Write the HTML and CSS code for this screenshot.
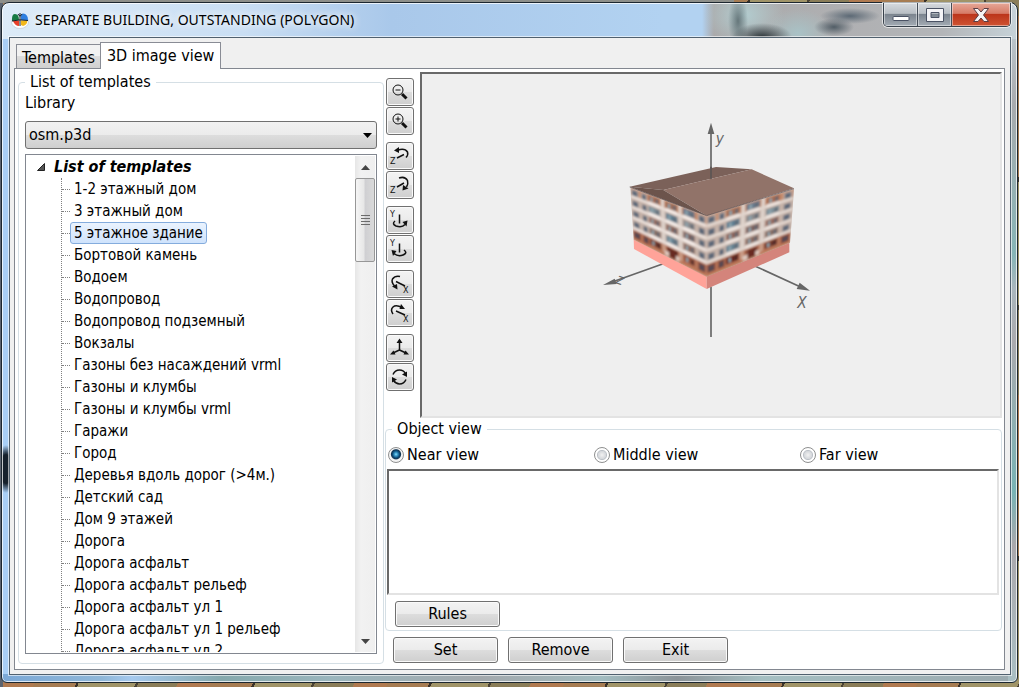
FILE: index.html
```html
<!DOCTYPE html>
<html lang="en">
<head>
<meta charset="utf-8">
<title>SEPARATE BUILDING, OUTSTANDING (POLYGON)</title>
<link rel="stylesheet" href="styles.css">
</head>
<body>
<div class="desktop">
<main class="window">
  <header class="titlebar">
    <svg class="app-icon" width="18" height="18" viewBox="0 0 18 18" aria-hidden="true">
      <ellipse cx="9" cy="11" rx="8.5" ry="6.5" fill="#fff" stroke="#b9c3cc" stroke-width=".6"/>
      <path d="M1 8Q1 3 4 3Q8 3 8 9L1 10Z" fill="#167a44"/>
      <path d="M10 9Q9 3 12 2.500Q17 3 17 9Z" fill="#2e7fe0"/>
      <path d="M2 10L8 9.500V15Q4 15 2 10Z" fill="#e8402c"/>
      <path d="M10 9.500H16.500Q16 14 12 15L10 14Z" fill="#f2b81c"/>
      <path d="M9 2V15M7 3Q9 7 11 3M1 10Q9 8 17 9.500" stroke="#17202a" stroke-width="1" fill="none"/>
    </svg>
    <h1 class="title">SEPARATE BUILDING, OUTSTANDING (POLYGON)</h1>
    <div class="caption">
      <button class="cap min" aria-label="Minimize"><svg width="18" height="16" viewBox="0 0 18 16"><rect x="1" y="9.500" width="16" height="4" rx="1" fill="#fff" stroke="#4a5264"/></svg></button>
      <button class="cap max" aria-label="Maximize"><svg width="18" height="16" viewBox="0 0 18 16"><path fill-rule="evenodd" d="M.5 1.500H17.500V14.500H.5ZM5 5.500V10.500H13V5.500Z" fill="#f4f4f6" stroke="#4a5264"/></svg></button>
      <button class="cap close" aria-label="Close"><svg width="18" height="16" viewBox="0 0 18 16"><path d="M1.500 1.500H6L9 5L12 1.500H16.500L11.500 8L16.500 14.500H12L9 11L6 14.500H1.500L6.500 8Z" fill="#f6f3f3" stroke="#5a3d44"/></svg></button>
    </div>
  </header>
  <div class="client">
    <div class="tabs" role="tablist">
      <button class="tab" role="tab" aria-selected="false">Templates</button>
      <button class="tab active" role="tab" aria-selected="true">3D image view</button>
    </div>
    <div class="panel" role="tabpanel">
      <fieldset class="group library">
        <legend>List of templates</legend>
        <label class="field-label" for="lib">Library</label>
        <div class="select-wrap">
          <select id="lib"><option>osm.p3d</option></select>
          <svg class="select-arrow" width="9" height="5" viewBox="0 0 9 5" aria-hidden="true"><path d="M0 0H9L4.500 5Z"/></svg>
        </div>
        <div class="tree">
          <div class="tree-body">
            <div class="tree-root"><svg width="8" height="8" viewBox="0 0 8 8" aria-hidden="true"><path d="M7.500 .5V7.500H.5Z" fill="#555" stroke="#222"/></svg><span>List of templates</span></div>
            <ul class="tree-list">
              <li><span>1-2 этажный дом</span></li>
              <li><span>3 этажный дом</span></li>
              <li><span class="selected">5 этажное здание</span></li>
              <li><span>Бортовой камень</span></li>
              <li><span>Водоем</span></li>
              <li><span>Водопровод</span></li>
              <li><span>Водопровод подземный</span></li>
              <li><span>Вокзалы</span></li>
              <li><span>Газоны без насаждений vrml</span></li>
              <li><span>Газоны и клумбы</span></li>
              <li><span>Газоны и клумбы vrml</span></li>
              <li><span>Гаражи</span></li>
              <li><span>Город</span></li>
              <li><span>Деревья вдоль дорог (&gt;4м.)</span></li>
              <li><span>Детский сад</span></li>
              <li><span>Дом 9 этажей</span></li>
              <li><span>Дорога</span></li>
              <li><span>Дорога асфальт</span></li>
              <li><span>Дорога асфальт рельеф</span></li>
              <li><span>Дорога асфальт ул 1</span></li>
              <li><span>Дорога асфальт ул 1 рельеф</span></li>
              <li><span>Дорога асфальт ул 2</span></li>
            </ul>
          </div>
          <div class="scrollbar">
            <button class="scroll-arrow" aria-label="Scroll up"><svg width="9" height="5" viewBox="0 0 9 5"><path d="M0 5H9L4.500 0Z" fill="#444"/></svg></button>
            <div class="thumb"><i></i><i></i><i></i><i></i></div>
            <button class="scroll-arrow end" aria-label="Scroll down"><svg width="9" height="5" viewBox="0 0 9 5"><path d="M0 0H9L4.500 5Z" fill="#444"/></svg></button>
          </div>
        </div>
      </fieldset>

      <div class="right">
        <div class="viewer">
          <div class="tools">
            <div class="pair">
              <button class="tool" aria-label="Zoom out"><svg viewBox="0 0 20 20"><circle cx="8" cy="8" r="5"/><path d="M5.500 8H10.500"/><path class="thick" d="M12 12L16.500 16.500"/></svg></button>
              <button class="tool" aria-label="Zoom in"><svg viewBox="0 0 20 20"><circle cx="8" cy="8" r="5"/><path d="M5.500 8H10.500M8 5.500V10.500"/><path class="thick" d="M12 12L16.500 16.500"/></svg></button>
            </div>
            <div class="pair">
              <button class="tool" aria-label="Rotate Z left"><svg viewBox="0 0 20 20"><path class="bold" d="M8 4Q15 2 17.500 6Q18.500 9 16 11.500M7 12L14 8.500"/><path class="solid" d="M4 4.500L9 1V7Z"/><text x="0" y="18">Z</text></svg></button>
              <button class="tool" aria-label="Rotate Z right"><svg viewBox="0 0 20 20"><path class="bold" d="M9 3Q15 1 17.500 5.500Q18.500 9 16.500 12M7 12L14 8"/><path class="solid" d="M12.500 15.500L13 10L18.500 13.500Z"/><text x="0" y="18">Z</text></svg></button>
            </div>
            <div class="pair">
              <button class="tool" aria-label="Rotate Y left"><svg viewBox="0 0 20 20"><path class="bold" d="M9.500 4.500V13.500M5 11Q1.500 14 6 16Q12 18 15 14.500"/><path class="solid" d="M12.500 12L17.500 10.500L16.500 16.500Z"/><text x="0" y="7">Y</text></svg></button>
              <button class="tool" aria-label="Rotate Y right"><svg viewBox="0 0 20 20"><path class="bold" d="M9.500 4.500V13.500M14 11Q18 14 13 16Q8 18 4 14.500"/><path class="solid" d="M1.500 11L6.500 12L3 17Z"/><text x="0" y="7">Y</text></svg></button>
            </div>
            <div class="pair">
              <button class="tool" aria-label="Rotate X left"><svg viewBox="0 0 20 20"><path class="bold" d="M10 2.500Q5 1.500 2.500 5Q1 8 4.500 12M6 7.500L15 12"/><path class="solid" d="M2 12.500L7 10L7.500 15.500Z"/><text x="13" y="19">X</text></svg></button>
              <button class="tool" aria-label="Rotate X right"><svg viewBox="0 0 20 20"><path class="bold" d="M3 11Q0 7 3 4Q6 1.500 12 4.500M6 8L15 12"/><path class="solid" d="M11 1L15 6H9.500Z"/><text x="13" y="19">X</text></svg></button>
            </div>
            <div class="pair">
              <button class="tool" aria-label="Show axes"><svg viewBox="0 0 20 20"><path class="bold" d="M9.500 4V12L3 15M9.500 12L16 15"/><path class="solid" d="M9.500 .5L12.500 5H6.500ZM0 16.500L3.500 12.500L5.500 16.500ZM19 16.500L15.500 12.500L13.500 16.500Z"/></svg></button>
              <button class="tool" aria-label="Refresh"><svg viewBox="0 0 20 20"><path class="bold" d="M3 7.500Q5 3 9.500 3Q13.500 3 15.500 6.500M16 12.500Q14 17 9.500 17Q6 17 3.500 13.500"/><path class="solid" d="M12 7.500L17 4.500V10ZM7 12.500L2 10V15.500Z"/></svg></button>
            </div>
          </div>
          <div class="scene">
            <svg class="model" viewBox="0 0 720 720" role="img" aria-label="Five-storey building on three axes">
              <defs><filter id="soft" x="-5%" y="-5%" width="110%" height="110%"><feGaussianBlur stdDeviation="2.600"/></filter>
                <clipPath id="walls"><path d="M121 232L350 317L612 237L600 398L350 501L131 389Z"/></clipPath></defs>
              <g stroke="#666" stroke-width="5">
                <path d="M363 530V681M228 458L60 518M486 464L640 535M363 60V206"/>
              </g>
              <path d="M363 38L373 72H353ZM39 525L74 506L80 522ZM660 542L620 537L629 518Z" fill="#666"/>
              <path d="M131 388L350 499V537L132 417Z" fill="#ffa399"/>
              <path d="M350 499L598 397V427L350 537Z" fill="#d4847b"/>
              <path d="M121 232L350 317V500L131 389Z" fill="#dccdc5"/>
              <path d="M350 317L612 237L600 398L350 500Z" fill="#cfc0b8"/>
              <g clip-path="url(#walls)"><g id="facade" filter="url(#soft)"></g></g>
              <path d="M119 230L378 171L485 178L220 240Z" fill="#7b6159"/>
              <path d="M220 240L485 178L612 235L350 317Z" fill="#917369"/>
              <path d="M119 230L220 240L350 317Z" fill="#6c544c"/>
              <path d="M119 231L350 317L612 236" fill="none" stroke="#5b4b4b" stroke-width="2"/>
              <path d="M363 170V206" stroke="#5c5554" stroke-width="5"/>
              <g class="axis-label">
                <text x="377" y="101">y</text>
                <text x="622" y="595">X</text>
                <text transform="translate(91 510) rotate(20)" x="-12" y="14">z</text>
              </g>
            </svg>
          </div>
        </div>
        <fieldset class="group object">
          <legend>Object view</legend>
          <div class="radios">
            <label><input type="radio" name="view" checked>Near view</label>
            <label><input type="radio" name="view">Middle view</label>
            <label><input type="radio" name="view">Far view</label>
          </div>
          <textarea aria-label="Object view rules"></textarea>
          <button class="btn">Rules</button>
        </fieldset>
        <div class="actions">
          <button class="btn">Set</button>
          <button class="btn">Remove</button>
          <button class="btn">Exit</button>
        </div>
      </div>
    </div>
  </div>
</main>
</div>
<script src="facade.js"></script>
</body>
</html>
```
FILE: styles.css
```css
* { box-sizing: border-box; }
body { margin: 0; font: 16px/22px "DejaVu Sans Condensed", "Noto Sans", sans-serif; color: #000; }
button, select, textarea { font: inherit; color: inherit; margin: 0; padding: 0; }
svg { display: block; }

.desktop {
  height: 100vh; min-height: 560px; padding: 2px 1px 4px; display: flex;
  background:
    linear-gradient(90deg, #8d8f8a 0 72%, transparent 72%) top / 100% 3px no-repeat,
    linear-gradient(90deg, #5c6470 0 3px, transparent 3px),
    repeating-linear-gradient(115deg, #a67c52 0 38px, #3a3128 38px 40px, #a09468 40px 92px, #4a4234 92px 94px, #8a7d58 94px 130px, #b07a50 130px 160px);
}
.window {
  flex: 1; min-width: 0; display: flex; flex-direction: column; padding: 0 6px 7px 7px;
  border: 1px solid #1c2730; border-radius: 8px 8px 6px 6px;
  box-shadow: inset 0 0 0 1px rgba(255,255,255,.75);
  background:
    radial-gradient(ellipse 30px 14px at 760px 34px, #2f383c 0, transparent 100%),
    radial-gradient(ellipse 10px 26px at 736px 18px, #66777b 0, transparent 100%),
    radial-gradient(ellipse 20px 9px at 832px 24px, #515d66 0, transparent 100%),
    radial-gradient(ellipse 30px 8px at 848px 13px, #5c6975 0, transparent 100%),
    radial-gradient(ellipse 40px 30px at 742px 12px, #b3cdd0 0, transparent 100%),
    radial-gradient(ellipse 34px 24px at 796px 30px, #a9c2c6 0, transparent 100%),
    linear-gradient(90deg, transparent 700px, #aaa9aa 712px, #b3b5b8 940px, #c6d2d8 100%) 0 0 / 100% 36px no-repeat,
    linear-gradient(#c2d0d8 0, #a9abae 15%, #86b5b6 37%, #a9b6bc 42%, #aaaaae 50%, #78b3b4 72%, #aaa8ac 80%, #a9bfc3 100%) right / 9px 100% no-repeat,
    radial-gradient(ellipse 10px 24px at 4px 466px, #16212c 0 60%, transparent 100%),
    linear-gradient(90deg, #7ba8d6 0, #8fb7d8 100px, #a5c9ee 130px, #86a9ad 220px, #9bb6bd 330px, #a3a9ad 480px, #a2bcc0 600px, #8c9499 675px, #a5bfc2 760px, #9ba9ae 100%) bottom / 100% 8px no-repeat,
    linear-gradient(90deg, #dcebf8 0, #c9def3 240px, #a9c8ea 390px, #b2d2f1 660px, #b2d2f1 100%) 0 0 / 100% 36px no-repeat,
    #a9cff6;
}
.titlebar { flex: 0 0 34px; display: flex; align-items: center; padding-left: 2px; }
.app-icon { margin-right: 6px; }
.title { margin: 0; font: 400 14px/20px "Noto Sans", sans-serif; text-shadow: 0 0 8px #fff, 0 0 8px #fff; white-space: nowrap; }
.caption { margin-left: auto; align-self: flex-start; display: flex; height: 24px; border: 1px solid #38414b; border-top: 0; border-radius: 0 0 5px 5px; overflow: hidden; box-shadow: 0 0 0 1px rgba(255,255,255,.65); }
.cap { border: 0; width: 34px; display: grid; place-items: center; background: linear-gradient(#d6dade 0, #b8bec4 45%, #7c858f 50%, #a3abb4 100%); box-shadow: inset 0 0 0 1px rgba(255,255,255,.45); border-right: 1px solid #444d58; }
.cap.close { width: 58px; border-right: 0; background: linear-gradient(#e6a898 0, #d67b67 45%, #bc351b 50%, #cf5433 100%); }

.client { flex: 1; min-height: 0; display: flex; flex-direction: column; padding: 4px 5px 4px 4px; background: #f0f0f0; border: 1px solid #50606e; box-shadow: 0 0 0 1px rgba(255,255,255,.6); }
.tabs { display: flex; align-items: flex-end; padding-left: 2px; height: 26px; }
.tab { height: 24px; padding: 2px 5px 0; border: 1px solid #898c95; border-right: 0; border-bottom: 0; background: linear-gradient(#f2f2f2 0 50%, #dddddd 50%, #d0d0d0); }
.tab.active { height: 27px; padding: 0 6px; margin-bottom: -1px; border-right: 1px solid #898c95; background: #fff; position: relative; }
.panel { flex: 1; min-height: 0; display: flex; border: 1px solid #828790; background: #fff; padding: 3px 2px 5px 3px; }

.group { min-width: 0; margin: 0; border: 1px solid #d5dfe5; border-radius: 4px; display: flex; flex-direction: column; }
.group legend { padding: 0 5px; line-height: 20px; }
.library { flex: 0 0 37.200%; padding: 0 6px 9px; }
.field-label { line-height: 22px; margin-bottom: 7px; }
.select-wrap { position: relative; flex: none; margin-bottom: 5px; }
.select-wrap select { width: 100%; height: 28px; display: block; appearance: none; padding: 0 24px 0 3px; border: 1px solid #707070; border-radius: 3px; background: linear-gradient(#f2f2f2 0, #ebebeb 50%, #dddddd 50%, #cfcfcf); }
.select-arrow { position: absolute; right: 5px; top: 12px; pointer-events: none; }
.tree { flex: 1 1 0; min-height: 0; display: flex; border: 1px solid #828790; padding: 1px; }
.tree-body { flex: 1; min-width: 0; overflow: hidden; padding-left: 10px; }
.tree-root { display: flex; align-items: center; height: 22px; font-weight: 700; font-style: italic; white-space: nowrap; }
.tree-root span { margin-left: 9px; }
.tree-list { list-style: none; margin: 0 0 0 24px; padding: 0; border-left: 1px dotted #808080; font-size: 15px; }
.tree-list li { height: 22px; display: flex; align-items: center; white-space: nowrap; }
.tree-list li::before { content: ""; width: 8px; border-top: 1px dotted #808080; }
.tree-list span { padding: 0 3px; border: 1px solid transparent; border-radius: 3px; line-height: 20px; }
.tree-list .selected { border-color: #84acdd; background: linear-gradient(#eaf3fe, #cfe3fc); }
.scrollbar { flex: 0 0 20px; display: flex; flex-direction: column; background: linear-gradient(90deg, #e6e6e6, #f2f2f2 30%, #efefef); }
.scroll-arrow { flex: 0 0 22px; border: 0; background: none; display: grid; place-items: center; }
.scroll-arrow.end { margin-top: auto; }
.thumb { flex: 0 0 17%; border: 1px solid #979797; border-radius: 2px; background: linear-gradient(90deg, #f5f5f5, #e6e6e6 45%, #cfcfd2 50%, #dadada); display: flex; flex-direction: column; align-items: center; justify-content: center; gap: 2px; }
.thumb i { width: 9px; height: 1px; background: #6b6b6b; }

.right { flex: 1; min-width: 0; display: flex; flex-direction: column; margin-left: 1px; }
.viewer { flex: 1; min-height: 0; display: flex; gap: 6px; padding-left: 1px; }
.tools { display: flex; flex-direction: column; gap: 7px; padding-top: 6px; }
.pair { display: flex; flex-direction: column; gap: 1px; }
.tool, .btn { border: 1px solid #707070; border-radius: 3px; background: linear-gradient(#f3f3f3 0, #ebebeb 50%, #dddddd 50%, #cfcfcf); box-shadow: inset 0 0 0 1px #fafafa; }
.tool { width: 28px; height: 28px; display: grid; place-items: center; }
.tool svg { width: 20px; height: 20px; fill: none; stroke: #111; stroke-width: 1; overflow: visible; }
.tool .thick { stroke-width: 3; }
.tool .bold { stroke-width: 1.500; }
.tool .solid { fill: #111; stroke: none; }
.tool text { font: 8px "DejaVu Sans", sans-serif; fill: #111; stroke: none; }
.scene { flex: 1; min-width: 0; overflow: hidden; display: flex; justify-content: center; align-items: flex-start; padding: 36px 2px 0 0; background: #efefef; border: 2px solid; border-color: #696969 #e3e3e3 #e3e3e3 #696969; }
.model { width: 240px; height: 240px; }
.axis-label text { font: italic 46px "DejaVu Sans Condensed", sans-serif; fill: #666; }

.object { padding: 0 2px 3px 1px; }
.object legend { margin-left: 5px; line-height: 22px; }
.radios { display: grid; grid-template-columns: repeat(3, 1fr); column-gap: 7px; padding: 4px 0 3px 1px; }
.radios label { display: flex; align-items: center; gap: 3px; }
.radios input { appearance: none; margin: 0; width: 16px; height: 16px; border: 1px solid #8e8f8f; border-radius: 50%; background: radial-gradient(circle, #f2f2f2 0, #d3d6da 40%, #bcc1c7 46%, #fff 56%); }
.radios input:checked { background: radial-gradient(circle at 50% 45%, #8fdcf8 0, #3a9fd0 14%, #0b4a78 34%, #123654 44%, #f4f4f4 54%); }
.object textarea { display: block; width: 100%; height: 126px; resize: none; background: #fff; border: 2px solid; border-color: #696969 #e3e3e3 #e3e3e3 #696969; margin-bottom: 6px; }
.btn { width: 105px; height: 26px; line-height: 24px; }
.object .btn { margin-left: 8px; }
.actions { display: flex; gap: 10px; padding: 6px 0 0 8px; height: 33px; }
```
FILE: facade.js
```javascript
// Fills the two perspective walls of the building with floors, windows and balconies.
const walls = [
  { tl: [121, 232], tr: [350, 317], br: [350, 500], bl: [131, 389] },
  { tl: [350, 317], tr: [612, 237], br: [600, 398], bl: [350, 500] }
];
const mix = (a, b, t) => [a[0] + (b[0] - a[0]) * t, a[1] + (b[1] - a[1]) * t];
const at = (w, u, v) => mix(mix(w.tl, w.tr, u), mix(w.bl, w.br, u), v);
const facade = document.getElementById("facade");

function patch(w, u0, v0, u1, v1, color) {
  const p = document.createElementNS("http://www.w3.org/2000/svg", "polygon");
  p.setAttribute("points", [at(w, u0, v0), at(w, u1, v0), at(w, u1, v1), at(w, u0, v1)].join(" "));
  p.setAttribute("fill", color);
  facade.append(p);
}

const recess = [
  ["#a4694f", "#9f6a52", "#68798c"],
  ["#7d8e96", "#5d7d90", "#8b8a8c"],
  ["#96695b", "#8c6256", "#7d5f5b"],
  ["#876c62", "#668292", "#8a675b"],
  ["#71372a", "#6a261c", "#934f3b"]
];
walls.forEach((w, side) => {
  for (let f = 0; f < 5; f++) {
    const v = f * 0.2;
    const ground = f === 4;
    patch(w, 0, v, 1, v + 0.2, ground ? "#b8775c" : f === 0 ? "#c48b6d" : "#c6b2a8");
    [[0.02, 0.09], [0.15, 0.2], [0.9, 0.97]].forEach(([a, b]) => {
      patch(w, a - 0.015, v + 0.02, b + 0.015, v + 0.18, ground ? "#914e3b" : "#bfaea5");
      patch(w, a, v + 0.04, b, v + 0.14, ground ? "#554a52" : "#5d6878");
    });
    [[0.23, 0.38], [0.46, 0.61], [0.69, 0.84]].forEach(([a, b], i) => {
      patch(w, a, v + 0.02, b, v + 0.13, recess[f][(i + side) % 3]);
      patch(w, a + 0.03, v + 0.04, a + 0.06, v + 0.12, "#8ea4ae");
      patch(w, b - 0.05, v + 0.04, b - 0.02, v + 0.12, ground ? "#4a2c2c" : "#626a75");
    });
    [[0.4, 0.44], [0.63, 0.67]].forEach(([a, b]) => patch(w, a, v, b, v + 0.2, ground ? "#c99d88" : "#ded3cc"));
    if (!ground) {
      patch(w, 0, v + 0.14, 1, v + 0.2, side ? "#e1d5ce" : "#eadfd9");
      [[0.23, 0.38], [0.46, 0.61], [0.69, 0.84]].forEach(([a, b]) => patch(w, a, v + 0.13, b, v + 0.185, side ? "#ede4df" : "#f5ece8"));
    } else {
      patch(w, 0, 0.95, 1, 1, "#bc7656");
      patch(w, 0.43, 0.9, 0.63, 0.98, "#ddc8be");
      patch(w, 0.49, 0.83, 0.58, 0.98, "#672c22");
    }
  }
});
```
